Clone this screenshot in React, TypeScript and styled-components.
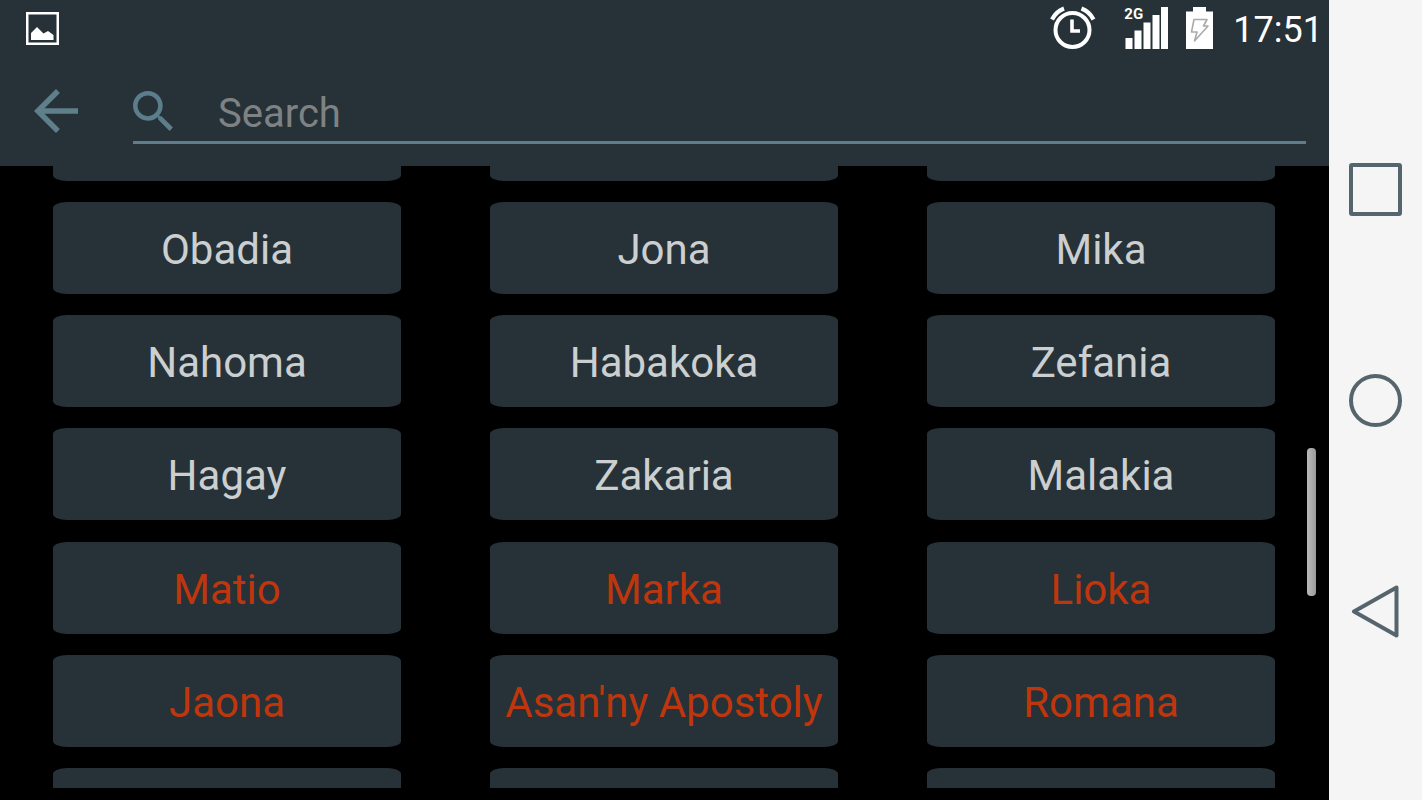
import React from "react";
import styled, { createGlobalStyle } from "styled-components";

const GlobalStyle = createGlobalStyle`
  *, *::before, *::after { box-sizing: border-box; }
  html, body { margin: 0; background: #000; }
  body { font-family: Roboto, "Liberation Sans", sans-serif; }
`;

const Screen = styled.div`
  display: flex;
  height: 100vh;
  background: #000;
`;

const Main = styled.main`
  position: relative;
  flex: 1;
  min-width: 0;
  display: flex;
  flex-direction: column;
`;

const Header = styled.header`
  flex: none;
  background: #263238;
`;

const StatusBar = styled.div`
  display: flex;
  align-items: center;
  justify-content: space-between;
  height: 56px;
  padding: 0 6px 0 26px;
  color: #fff;
`;

const StatusIcons = styled.div`
  display: flex;
  align-items: center;
  svg { display: block; }
`;

const Signal = styled.div`
  position: relative;
  margin: 0 18px 0 28px;
`;

const Network = styled.span`
  position: absolute;
  top: 0;
  left: 0;
  font-size: 15px;
  line-height: 15px;
  font-weight: 700;
`;

const Time = styled.time`
  margin-left: 20px;
  padding-top: 4px;
  font-size: 36px;
  line-height: 42px;
`;

const Toolbar = styled.div`
  display: flex;
  align-items: center;
  height: 110px;
  padding: 0 23px 0 34px;
`;

const BackButton = styled.button`
  display: block;
  flex: none;
  padding: 0;
  margin-right: 55px;
  border: 0;
  background: none;
  color: #5f7f8a;
  svg { display: block; }
`;

const SearchField = styled.label`
  flex: 1;
  display: flex;
  align-items: center;
  gap: 43px;
  height: 64px;
  margin-top: 2px;
  border-bottom: 3px solid #607d8b;
  color: #5c7d8c;
  svg { flex: none; display: block; }
`;

const SearchInput = styled.input`
  flex: 1;
  min-width: 0;
  padding: 6px 0 0 2px;
  border: 0;
  outline: 0;
  background: none;
  color: #ccc;
  font-family: inherit;
  font-size: 40px;
  line-height: 48px;
  &::placeholder { color: #7f8283; opacity: 1; }
`;

const BookList = styled.section`
  flex: 1;
  min-height: 0;
  display: grid;
  grid-template-columns: repeat(3, minmax(0, 1fr));
  grid-template-rows: 15px repeat(5, 92px) 20px;
  align-content: space-between;
  column-gap: 89px;
  margin-bottom: 12px;
  padding: 0 54px 0 53px;
`;

const Clip = styled.div<{ $end?: boolean }>`
  display: flex;
  align-items: ${(p) => (p.$end ? "flex-end" : "flex-start")};
  overflow: hidden;
`;

const BookButton = styled.button<{ $accent?: boolean }>`
  flex: none;
  width: 100%;
  height: 92px;
  padding: 4px 0 0;
  border: 0;
  border-radius: 14px / 6px;
  background: #263238;
  color: ${(p) => (p.$accent ? "#bf360c" : "#cccfd0")};
  font-family: inherit;
  font-size: 42px;
  line-height: 50px;
  white-space: nowrap;
`;

const ScrollThumb = styled.div`
  position: absolute;
  top: 56%;
  right: 13px;
  width: 9px;
  height: 148px;
  border-radius: 4px;
  background: linear-gradient(90deg, #bbb, #999);
`;

const NavBar = styled.nav`
  flex: none;
  width: 93px;
  display: flex;
  flex-direction: column;
  align-items: center;
  justify-content: center;
  gap: 158px;
  background: #f5f5f5;
`;

const NavButton = styled.button`
  padding: 0;
  border: 0;
  background: none;
  color: #56656d;
  svg { display: block; }
`;

const PictureIcon = () => (
  <svg width="33" height="33" viewBox="0 0 33 33" fill="none" aria-hidden="true">
    <rect x="1.25" y="1.25" width="30.5" height="30.5" stroke="#fff" strokeWidth="2.5" />
    <path d="M5 28V21L11 15L17.5 21.5L22 19L27.5 23V28Z" fill="#fff" />
  </svg>
);

const AlarmIcon = () => (
  <svg width="46" height="44" viewBox="0 0 46 44" fill="none" stroke="#fff" aria-hidden="true">
    <circle cx="22.5" cy="24" r="17" strokeWidth="4" />
    <path d="M22 13.5V25H30" strokeWidth="3.6" />
    <path d="M2 13.5Q6 5.5 14 2.5M43.500 13.500Q39.500 5.500 31.500 2.500" strokeWidth="4.2" />
  </svg>
);

const SignalIcon = () => (
  <svg width="44" height="42" viewBox="0 0 44 42" fill="#fff" aria-hidden="true">
    <path d="M1.5 31H8.5V42H1.5ZM10.5 23.5H17.5V42H10.5ZM19.5 15.5H26.5V42H19.5ZM28.5 8H35.5V42H28.5ZM37 0H44V42H37Z" />
  </svg>
);

const BatteryIcon = () => (
  <svg width="27" height="42" viewBox="0 0 27 42" aria-hidden="true">
    <path d="M7 0H20V4.5H27V42H0V4.5H7Z" fill="#fff" />
    <path d="M8 12.5H21L17.5 19H22L8.5 34L11 25H5.5Z" fill="none" stroke="#aaa" strokeWidth="1.6" strokeLinejoin="round" />
  </svg>
);

const BackIcon = () => (
  <svg width="44" height="44" viewBox="4 4 16 16" fill="currentColor" aria-hidden="true">
    <path d="M20 11H7.83l5.59-5.59L12 4l-8 8 8 8 1.41-1.41L7.83 13H20v-2z" />
  </svg>
);

const SearchIcon = () => (
  <svg width="40" height="40" viewBox="3 3 17.5 17.5" fill="currentColor" aria-hidden="true">
    <path d="M15.5 14h-.79l-.28-.27C15.41 12.59 16 11.11 16 9.5 16 5.91 13.09 3 9.5 3S3 5.91 3 9.5 5.91 16 9.5 16c1.61 0 3.09-.59 4.23-1.57l.27.28v.79l5 4.99L20.49 19l-4.99-5zm-6 0C7.01 14 5 11.99 5 9.5S7.01 5 9.5 5 14 7.01 14 9.5 11.99 14 9.5 14z" />
  </svg>
);

const navItems = [
  { label: "Recent apps", shape: <rect x="2" y="2" width="49" height="49" rx="1" /> },
  { label: "Home", shape: <circle cx="26.5" cy="26.5" r="24.5" /> },
  { label: "Back", shape: <path d="M5 26.5L47.5 2.5V50.5Z" /> },
];

const above = ["Hosea", "Joela", "Amosa"];
const oldBooks = ["Obadia", "Jona", "Mika", "Nahoma", "Habakoka", "Zefania", "Hagay", "Zakaria", "Malakia"];
const newBooks = ["Matio", "Marka", "Lioka", "Jaona", "Asan'ny Apostoly", "Romana"];
const below = ["I Korintiana", "II Korintiana", "Galatiana"];

export default function App() {
  return (
    <>
      <GlobalStyle />
      <Screen>
        <Main>
          <Header>
            <StatusBar>
              <PictureIcon />
              <StatusIcons>
                <AlarmIcon />
                <Signal>
                  <SignalIcon />
                  <Network>2G</Network>
                </Signal>
                <BatteryIcon />
                <Time>17:51</Time>
              </StatusIcons>
            </StatusBar>
            <Toolbar>
              <BackButton type="button" aria-label="Go back">
                <BackIcon />
              </BackButton>
              <SearchField>
                <SearchIcon />
                <SearchInput type="text" placeholder="Search" aria-label="Search" />
              </SearchField>
            </Toolbar>
          </Header>
          <BookList aria-label="Books">
            {above.map((name) => (
              <Clip key={name} $end>
                <BookButton type="button" aria-label={name} />
              </Clip>
            ))}
            {oldBooks.map((name) => (
              <BookButton key={name} type="button">{name}</BookButton>
            ))}
            {newBooks.map((name) => (
              <BookButton key={name} type="button" $accent>{name}</BookButton>
            ))}
            {below.map((name) => (
              <Clip key={name}>
                <BookButton type="button" $accent aria-label={name} />
              </Clip>
            ))}
          </BookList>
          <ScrollThumb />
        </Main>
        <NavBar aria-label="System navigation">
          {navItems.map(({ label, shape }) => (
            <NavButton key={label} type="button" aria-label={label}>
              <svg width="53" height="53" viewBox="0 0 53 53" fill="none" stroke="currentColor" strokeWidth="4" strokeLinejoin="round" aria-hidden="true">
                {shape}
              </svg>
            </NavButton>
          ))}
        </NavBar>
      </Screen>
    </>
  );
}
